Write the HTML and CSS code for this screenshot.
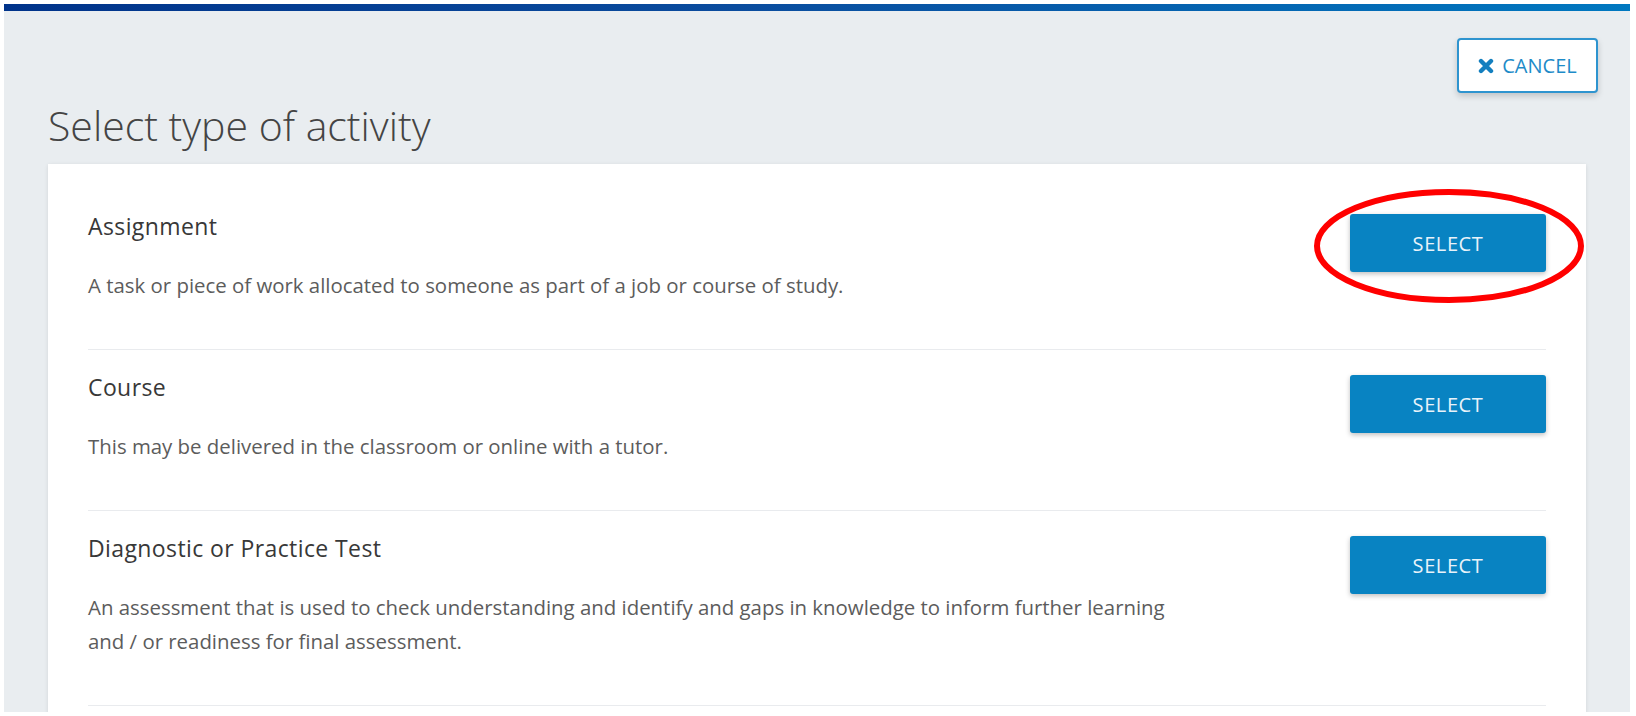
FILE: index.html
```html
<!DOCTYPE html>
<html lang="en">
<head>
<meta charset="utf-8">
<title>Select type of activity</title>
<link rel="stylesheet" href="styles.css">
</head>
<body>
<div class="frame">
  <div class="topbar"></div>
  <div class="page">
    <div class="header">
      <button class="cancel-btn" type="button">
        <svg class="cancel-icon" viewBox="0 0 16 16" width="16" height="16" aria-hidden="true">
          <path d="M3 3 L13 13 M13 3 L3 13" stroke="currentColor" stroke-width="4.4" stroke-linecap="round" fill="none"/>
        </svg>
        <span>CANCEL</span>
      </button>
    </div>
    <h1 class="page-title">Select type of activity</h1>
    <div class="card">
      <div class="activity">
        <div class="activity-text">
          <h2 class="activity-title">Assignment</h2>
          <p class="activity-desc">A task or piece of work allocated to someone as part of a job or course of study.</p>
        </div>
        <div class="activity-action">
          <button class="select-btn" type="button">SELECT</button>
          <svg class="highlight" viewBox="0 0 272 116" width="272" height="116" aria-hidden="true">
            <ellipse cx="136" cy="58" rx="132" ry="54" fill="none" stroke="#ff0000" stroke-width="6"/>
          </svg>
        </div>
      </div>
      <div class="activity">
        <div class="activity-text">
          <h2 class="activity-title">Course</h2>
          <p class="activity-desc">This may be delivered in the classroom or online with a tutor.</p>
        </div>
        <div class="activity-action">
          <button class="select-btn" type="button">SELECT</button>
        </div>
      </div>
      <div class="activity">
        <div class="activity-text">
          <h2 class="activity-title">Diagnostic or Practice Test</h2>
          <p class="activity-desc">An assessment that is used to check understanding and identify and gaps in knowledge to inform further learning and / or readiness for final assessment.</p>
        </div>
        <div class="activity-action">
          <button class="select-btn" type="button">SELECT</button>
        </div>
      </div>
    </div>
  </div>
</div>
</body>
</html>
```

FILE: styles.css
```css
* {
  box-sizing: border-box;
}

html, body {
  margin: 0;
  padding: 0;
  background: #ffffff;
  font-family: "Open Sans", "Liberation Sans", sans-serif;
}

.frame {
  margin: 4px 6px 0 4px;
  height: 708px;
  background: #e9edf0;
  overflow: hidden;
}

.topbar {
  height: 7px;
  background: linear-gradient(90deg, #00338a 0%, #0a4c9e 45%, #0078c0 100%);
}

.page {
  padding: 0 44px 0 44px;
}

.header {
  display: flex;
  justify-content: flex-end;
  margin-top: 27px;
  margin-right: -12px;
}

.cancel-btn {
  display: flex;
  align-items: center;
  justify-content: center;
  gap: 8px;
  width: 141px;
  height: 55px;
  padding: 0;
  background: #ffffff;
  border: 2px solid #2e94cf;
  border-radius: 4px;
  box-shadow: 0 3px 6px rgba(0, 0, 0, 0.18);
  color: #1e8bc8;
  font-family: "Open Sans", "Liberation Sans", sans-serif;
  font-size: 20px;
  letter-spacing: 0;
  cursor: pointer;
}

.cancel-icon {
  width: 16px;
  height: 16px;
  color: #137fbf;
  flex: none;
}

.page-title {
  margin: 7px 0 0 0;
  font-size: 41px;
  line-height: 50px;
  font-weight: 300;
  color: #444444;
}

.card {
  margin-top: 14px;
  background: #ffffff;
  padding: 25px 40px 0 40px;
  box-shadow: 0 1px 4px rgba(0, 0, 0, 0.10);
  min-height: 600px;
}

.activity {
  display: flex;
  justify-content: space-between;
  align-items: flex-start;
  padding: 22px 0 47px 0;
  border-bottom: 1px solid #e9ebee;
}

.activity-text {
  flex: 0 1 1094px;
}

.activity-title {
  margin: 0;
  font-size: 23px;
  line-height: 30px;
  font-weight: 400;
  letter-spacing: 0.4px;
  color: #383838;
}

.activity-desc {
  margin: 27px 0 0 0;
  font-size: 20.4px;
  line-height: 34px;
  color: #5c5c5c;
}

.activity-action {
  position: relative;
  flex: none;
  margin-top: 3px;
}

.select-btn {
  display: block;
  width: 196px;
  height: 58px;
  padding: 0;
  border: none;
  border-radius: 3px;
  background: #0883c2;
  color: #e8f3fa;
  font-family: "Open Sans", "Liberation Sans", sans-serif;
  font-size: 20px;
  letter-spacing: 0.6px;
  box-shadow: 0 2px 5px rgba(0, 0, 0, 0.25);
  cursor: pointer;
}

.highlight {
  position: absolute;
  left: -37px;
  top: -26px;
  pointer-events: none;
}
```
